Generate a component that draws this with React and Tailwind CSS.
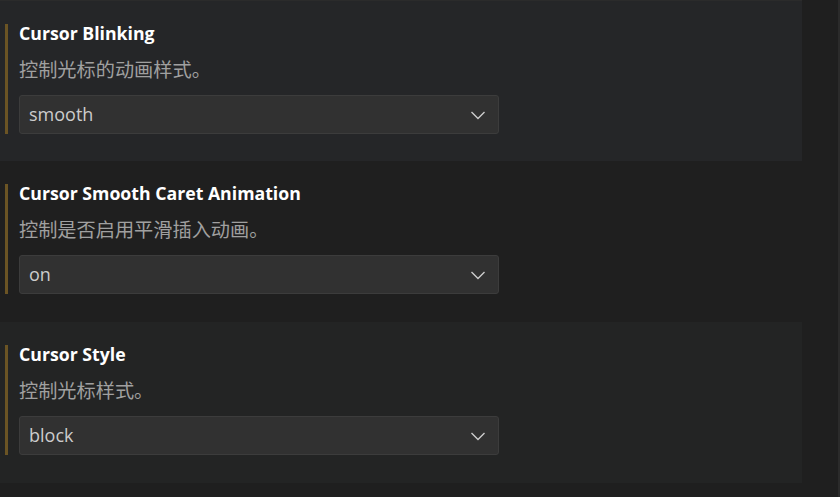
const settings = [
  {
    title: 'Cursor Blinking',
    description: '控制光标的动画样式。',
    value: 'smooth',
    bg: 'bg-[#252628] border-t border-[#2b2b2b] pt-[23px]',
  },
  {
    title: 'Cursor Smooth Caret Animation',
    description: '控制是否启用平滑插入动画。',
    value: 'on',
    bg: 'bg-[#1f1f1f] pt-[23px]',
  },
  {
    title: 'Cursor Style',
    description: '控制光标样式。',
    value: 'block',
    bg: 'bg-[#232424] pt-[23px]',
  },
];

const Chevron = () => (
  <svg width="16" height="10" viewBox="0 0 16 10" fill="none">
    <path d="M1.5 2 L8 8.5 L14.5 2" stroke="#cccccc" strokeWidth="1.4" />
  </svg>
);

const SettingItem = ({ title, description, value, bg }) => (
  <div className={`${bg} h-[161px] w-[802px] pl-[5px]`}>
    <div className="flex h-[110px] border-l-[3px] border-[#6b5424] pl-[11px]">
      <div className="flex flex-col">
        <div className="mt-[-3px] text-[17.7px] font-bold leading-[24px] text-white">{title}</div>
        <div className="mt-[13px] text-[19.2px] leading-[24px] text-[#a0a0a0]">{description}</div>
        <div className="mt-[13px] flex h-[39px] w-[480px] items-center justify-between rounded-[3px] border border-[#3c3c3c] bg-[#313131] pl-[9px] pr-[12px]">
          <span className="text-[18px] text-[#cccccc]">{value}</span>
          <Chevron />
        </div>
      </div>
    </div>
  </div>
);

export default function App() {
  return (
    <div
      className="flex h-[497px] w-[840px] overflow-hidden bg-[#1f1f1f]"
      style={{ fontFamily: '"Open Sans", "Noto Sans CJK SC", sans-serif' }}
    >
      <div className="flex flex-1 flex-col">
        {settings.map((s) => (
          <SettingItem key={s.title} {...s} />
        ))}
      </div>
      <div className="w-[2px] bg-[#2b2b2b]" />
    </div>
  );
}
